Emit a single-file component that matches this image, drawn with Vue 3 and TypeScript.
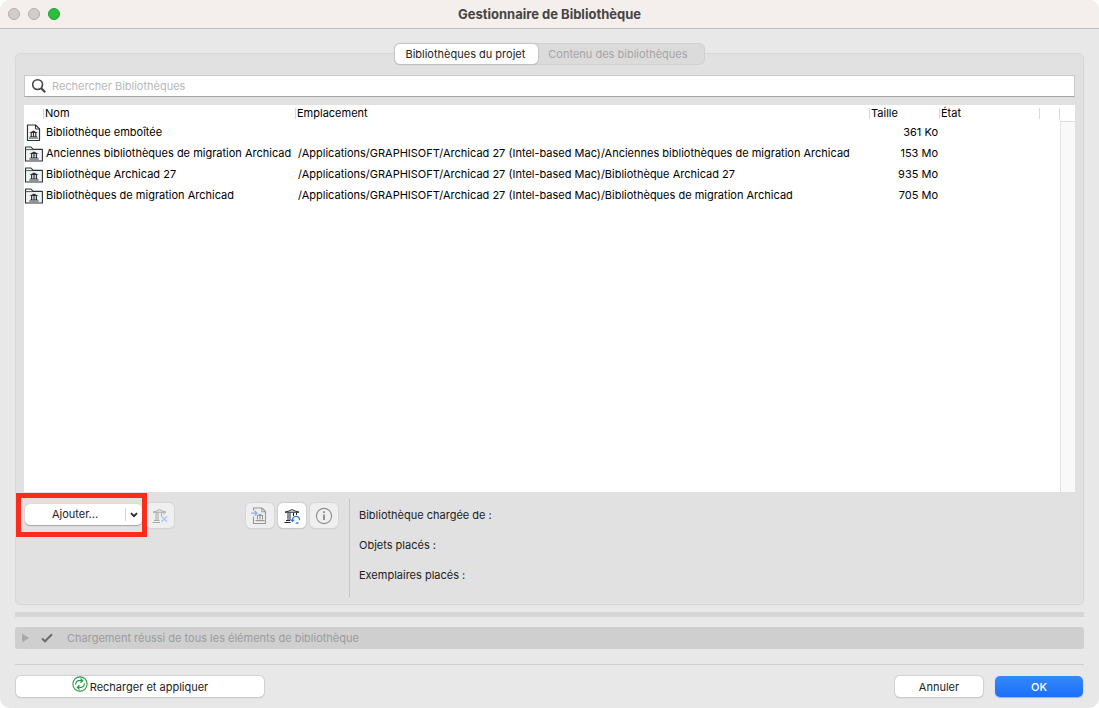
<script setup lang="ts">
import { ref } from 'vue'

interface Library {
  name: string
  path: string
  size: string
  embedded?: boolean
}

const root = '/Applications/GRAPHISOFT/Archicad 27 (Intel-based Mac)/'
const libraries: Library[] = [
  { name: 'Bibliothèque emboîtée', path: '', size: '361 Ko', embedded: true },
  { name: 'Anciennes bibliothèques de migration Archicad', path: root + 'Anciennes bibliothèques de migration Archicad', size: '153 Mo' },
  { name: 'Bibliothèque Archicad 27', path: root + 'Bibliothèque Archicad 27', size: '935 Mo' },
  { name: 'Bibliothèques de migration Archicad', path: root + 'Bibliothèques de migration Archicad', size: '705 Mo' },
]
const details: string[] = ['Bibliothèque chargée de :', 'Objets placés :', 'Exemplaires placés :']
const query = ref('')
</script>

<template>
  <div class="window">
    <header class="titlebar">
      <div class="lights">
        <button class="light" type="button" aria-label="Fermer"></button>
        <button class="light" type="button" aria-label="Réduire"></button>
        <button class="light zoom" type="button" aria-label="Agrandir"></button>
      </div>
      <h1>Gestionnaire de Bibliothèque</h1>
    </header>

    <main class="content">
      <section class="panel">
        <div class="tabs" role="tablist">
          <button class="tab active" type="button" role="tab" aria-selected="true">Bibliothèques du projet</button>
          <button class="tab" type="button" role="tab" aria-selected="false" disabled>Contenu des bibliothèques</button>
        </div>

        <label class="search">
          <svg width="16" height="16" viewBox="0 0 16 16" fill="none" stroke="#454545">
            <circle cx="6.6" cy="6.6" r="4.9" stroke-width="1.6" />
            <path d="M10.2 10.2L14.2 14.2" stroke-width="2.2" />
          </svg>
          <input v-model="query" type="text" placeholder="Rechercher Bibliothèques" aria-label="Rechercher Bibliothèques">
        </label>

        <div class="list">
          <table>
            <colgroup>
              <col class="c-icon"><col class="c-name"><col><col class="c-size"><col class="c-state"><col class="c-extra">
            </colgroup>
            <thead>
              <tr>
                <th></th>
                <th>Nom</th>
                <th>Emplacement</th>
                <th>Taille</th>
                <th>État</th>
                <th class="last"></th>
              </tr>
            </thead>
            <tbody>
              <tr v-for="lib in libraries" :key="lib.name">
                <td class="icon">
                  <svg v-if="lib.embedded" width="19" height="18" viewBox="0 0 19 18" fill="none" stroke="#27323a">
                    <path d="M3.5 1H11.6L15.5 4.9V16.5H3.5Z" fill="#fff" stroke-width="1.2" stroke-linejoin="round" />
                    <path d="M11.5 1V5H15.5" />
                    <path d="M5 9L9.5 6.4L14 9Z" fill="#27323a" stroke="none" />
                    <path d="M7.2 9V13M9.5 9V13M11.8 9V13" stroke-width="1.2" />
                    <path d="M5.8 12.5H13.2" stroke-width=".7" />
                    <path d="M5 14H14" stroke-width="1.1" />
                  </svg>
                  <svg v-else width="19" height="18" viewBox="0 0 19 18" fill="none" stroke="#27323a">
                    <path d="M1.5 16V2H7L9.2 4.4H18.4V16Z" fill="#f3f3f3" stroke-width="1.1" stroke-linejoin="round" />
                    <path d="M1.5 4.6H9.2" stroke-width=".8" />
                    <path d="M5.3 9L10 6.6L14.7 9Z" fill="#27323a" stroke="none" />
                    <path d="M7.6 9V13M10 9V13M12.4 9V13" stroke-width="1.2" />
                    <path d="M6.3 12.6H13.7" stroke-width=".6" />
                    <path d="M5.3 14H14.7" stroke-width="1.1" />
                  </svg>
                </td>
                <td>{{ lib.name }}</td>
                <td>{{ lib.path }}</td>
                <td class="size">{{ lib.size }}</td>
                <td></td>
                <td></td>
              </tr>
            </tbody>
          </table>
          <div class="scroll"></div>
        </div>

        <div class="lower">
          <div class="tools">
            <div class="add">
              <button class="add-main" type="button">Ajouter...</button>
              <button class="add-menu" type="button" aria-label="Options d'ajout">
                <svg width="8" height="6" viewBox="0 0 8 6" fill="none" stroke="#222" stroke-width="1.7"><path d="M1 1.2L4 4.2L7 1.2" /></svg>
              </button>
              <span class="highlight"></span>
            </div>
            <button class="tool" type="button" aria-label="Supprimer" disabled>
              <svg width="18" height="18" viewBox="0 0 18 18" fill="none" stroke="#a6a8a9">
                <path d="M2 5.2C4.5 4.6 6.5 3.8 8.5 2.6C10.5 3.8 12.5 4.6 15 5.2Z" />
                <path d="M5 5.5V13.5M7 5.5V13.5M10.5 5.5V9M13 5.5V7.5" />
                <path d="M3 13.5H8.5M1.5 15.5H9" />
                <path d="M10.5 9.3L16 14.8M16 9.3L10.5 14.8" stroke="#a9c7f7" stroke-width="1.5" />
              </svg>
            </button>
            <span class="spacer"></span>
            <button class="tool" type="button" aria-label="Importer" disabled>
              <svg width="18" height="18" viewBox="0 0 18 18" fill="none" stroke="#96999b">
                <path d="M2.5 3.5V1H11L14.5 4.5V16.5H2.5V9.5" stroke-width="1.1" />
                <path d="M10.8 1.2V4.8H14.4" />
                <path d="M5 9L9 6.8L13 9Z" fill="#96999b" stroke="none" />
                <path d="M6.5 9V12.5M9 9V12.5M11.5 9V12.5" stroke-width="1.1" />
                <path d="M4.5 13.6H13.5" stroke-width="1.2" />
                <path d="M0 6.2H5.8M3.6 3.8L6 6.2L3.6 8.6" stroke="#85aff5" stroke-width="1.3" />
              </svg>
            </button>
            <button class="tool enabled" type="button" aria-label="Recharger la bibliothèque">
              <svg width="18" height="18" viewBox="0 0 18 18" fill="none" stroke="#20262c">
                <path d="M2 5.2C4.5 4.6 6.7 3.8 9 2.6C11.3 3.8 13.5 4.6 16 5.2Z" />
                <path d="M5 5.5V13.5M7 5.5V13.5M10.5 5.5V9M13.5 5.5V8" />
                <path d="M3 13.5H7M1.5 15.5H7.5" stroke-width="1.2" />
                <path d="M9.6 14C8.9 11.2 10.8 9.3 13 9.3C15.2 9.3 16.7 11 16.5 13.2M15.5 15.4C14.8 16 14 16.3 12.6 16.2" stroke="#2e73ee" stroke-width="1.3" />
                <path d="M7.8 12.7L9.6 14.4L11.3 12.7" stroke="#2e73ee" stroke-width="1.1" />
              </svg>
            </button>
            <button class="tool" type="button" aria-label="Informations" disabled>
              <svg width="18" height="18" viewBox="0 0 18 18" fill="none" stroke="#8f8f8f">
                <circle cx="9" cy="9" r="7.6" stroke-width="1.1" />
                <path d="M9 7.5V13M9 4.3V6.1" stroke-width="1.9" />
              </svg>
            </button>
          </div>
          <div class="details">
            <p v-for="line in details" :key="line">{{ line }}</p>
          </div>
        </div>
      </section>

      <div class="splitter"></div>

      <div class="status">
        <svg width="8" height="10" viewBox="0 0 8 10"><path d="M0 .7L7.4 5L0 9.3Z" fill="#a9a9a9" /></svg>
        <svg class="check" width="12" height="10" viewBox="0 0 12 10" fill="none" stroke="#6d6d6d" stroke-width="2.1"><path d="M1 5.5L4 8.3L11 1.2" /></svg>
        <span>Chargement réussi de tous les éléments de bibliothèque</span>
      </div>

      <footer class="actions">
        <button class="push reload" type="button">
          <svg width="16" height="16" viewBox="0 0 16 16" fill="none" stroke="#259b48" stroke-width="1.1">
            <circle cx="8" cy="8" r="7.1" />
            <path d="M3.7 8.6C3.5 6.3 4.9 4.7 7 4.7H10.2M8.5 2.5L10.7 4.7L8.5 6.9M12.3 7.4C12.5 9.7 11.1 11.3 9 11.3H5.8M7.5 9.1L5.3 11.3L7.5 13.5" stroke-width="1.2" />
          </svg>
          <span>Recharger et appliquer</span>
        </button>
        <button class="push" type="button">Annuler</button>
        <button class="push primary" type="button">OK</button>
      </footer>
    </main>
  </div>
</template>

<style>
body {
  background: #fff;
}
</style>

<style scoped>
* {
  box-sizing: border-box;
}

.window {
  display: flex;
  flex-direction: column;
  min-height: 100vh;
  overflow: hidden;
  border-radius: 10px;
  background: #e8e8e8;
  color: #000;
  font-family: Inter, "Liberation Sans", sans-serif;
  font-size: 11px;
  line-height: 16px;
}

button {
  margin: 0;
  padding: 0;
  border: 0;
  font: inherit;
  color: #222;
}

svg {
  display: block;
  flex: none;
}

.titlebar {
  display: grid;
  grid-template-columns: 1fr auto 1fr;
  align-items: center;
  height: 29px;
  padding: 0 8px;
  border-bottom: 1px solid #bfbbba;
  background: #f4eeec;
}

.lights {
  display: flex;
  gap: 8px;
}

.light {
  width: 12px;
  height: 12px;
  border: 1px solid #b5afad;
  border-radius: 50%;
  background: #d2ccca;
}

.light.zoom {
  border-color: #24a032;
  background: #2bbd3f;
}

h1 {
  margin: 0;
  padding-bottom: 1px;
  color: #474443;
  font-size: 13px;
  font-weight: 700;
  line-height: 16px;
}

.content {
  display: flex;
  flex: 1;
  flex-direction: column;
  padding: 24px 15px 11px;
}

.panel {
  display: flex;
  flex: 1;
  flex-direction: column;
  border: 1px solid #d7d7d7;
  border-radius: 5px;
  background: #e1e1e1;
}

.tabs {
  display: flex;
  align-self: center;
  height: 22px;
  margin-top: -11px;
  border: 1px solid #d0d0d0;
  border-radius: 6px;
  background: #dbdbdb;
}

.tab {
  height: 20px;
  padding: 0 16px 1px 10px;
  border-radius: 5px;
  background: transparent;
  color: #a5a5a5;
}

.tab.active {
  padding: 0 13px 1px 10px;
  background: #fff;
  color: #222;
  box-shadow: 0 0 1px 1px #c4c4c4, 0 1px 1px #aaa;
}

.search {
  display: flex;
  align-items: center;
  gap: 5px;
  height: 22px;
  margin: 10px 8px 8px;
  padding-left: 6px;
  border: 1px solid #c9c9c9;
  border-bottom-color: #a5a5a5;
  background: #fff;
}

.search input {
  flex: 1;
  min-width: 0;
  height: 20px;
  padding: 0;
  border: 0;
  outline: 0;
  background: transparent;
  font: inherit;
}

.search input::placeholder {
  color: #b8b8b8;
  opacity: 1;
}

.list {
  display: flex;
  flex: 1;
  margin: 0 8px;
  background: #fff;
}

table {
  flex: 1;
  width: 0;
  align-self: flex-start;
  border-collapse: collapse;
  table-layout: fixed;
}

.c-icon { width: 19px; }
.c-name { width: 252px; }
.c-size { width: 70px; }
.c-state { width: 100px; }
.c-extra { width: 21px; }

th {
  height: 17px;
  padding: 0 0 0 2px;
  background: linear-gradient(#d9d9d9, #d9d9d9) 0 3px / 1px 11px no-repeat;
  font-weight: 400;
  line-height: 17px;
  text-align: left;
}

th:first-child {
  background: none;
}

th.last {
  background:
    linear-gradient(#d9d9d9, #d9d9d9) 0 3px / 1px 11px no-repeat,
    linear-gradient(#d9d9d9, #d9d9d9) 20px 3px / 1px 11px no-repeat;
}

td {
  height: 21px;
  padding: 0 0 0 3px;
  line-height: 21px;
  white-space: nowrap;
}

td.icon {
  padding: 0;
}

td.size {
  padding-right: 1px;
  text-align: right;
}

.scroll {
  width: 15px;
  margin-top: 16px;
  border-top: 1px solid #dedede;
  border-left: 1px solid #e3e3e3;
  background: #f9f9f9;
}

.lower {
  display: flex;
  height: 112px;
  padding: 7px 8px;
}

.tools {
  display: flex;
  align-items: flex-start;
  gap: 4px;
  width: 325px;
  padding: 4px 11px 0 1px;
}

.add {
  position: relative;
  display: flex;
  width: 117px;
  height: 21px;
  margin-top: 1px;
  border-radius: 5px;
  background: #fff;
  box-shadow: 0 0 1px #b5b5b5, 0 1px 1px #a5a5a5;
}

.add-main {
  flex: 1;
  padding-bottom: 1px;
  background: transparent;
}

.add-menu {
  display: flex;
  align-items: center;
  justify-content: center;
  width: 17px;
  margin: 4px 0;
  border-left: 1px solid #d3d3d3;
  background: transparent;
}

.highlight {
  position: absolute;
  inset: -11px -5px -12px -9px;
  border: 5px solid #fc2b1c;
  pointer-events: none;
}

.tool {
  display: flex;
  align-items: center;
  justify-content: center;
  width: 28px;
  height: 25px;
  border-radius: 5px;
  background: #efefef;
  box-shadow: 0 0 1px 1px #d6d6d6, 0 1px 1px #c0c0c0;
}

.tool.enabled {
  background: #fff;
  box-shadow: 0 0 1px 1px #cecece, 0 1px 1px #aaa;
}

.spacer {
  flex: 1;
}

.details {
  flex: 1;
  padding: 1px 0 0 9px;
  border-left: 1px solid #c6c6c6;
}

.details p {
  height: 30px;
  margin: 0;
  color: #222;
  line-height: 30px;
}

.splitter {
  height: 5px;
  margin-top: 7px;
  background: #d6d6d6;
}

.status {
  display: flex;
  align-items: center;
  height: 22px;
  margin-top: 10px;
  padding-left: 7px;
  border-radius: 3px;
  background: #cfcfcf;
  color: #9c9c9c;
}

.check {
  margin: 0 14px 0 11px;
}

.actions {
  display: flex;
  gap: 12px;
  margin-top: 15px;
  padding-top: 11px;
  border-top: 1px solid #cecece;
}

.push {
  width: 88px;
  height: 21px;
  border-radius: 5px;
  background: #fff;
  box-shadow: 0 0 1px 1px #d0d0d0, 0 1px 1px #aaa;
}

.reload {
  display: flex;
  justify-content: center;
  gap: 2px;
  width: 248px;
  margin: 0 auto 0 1px;
}

.reload span {
  padding-top: 3px;
}

.primary {
  margin-right: 1px;
  background: linear-gradient(#3489fb, #1c6ffa);
  color: #fff;
  font-weight: 500;
  box-shadow: 0 1px 1px #8eb4ed;
}
</style>
